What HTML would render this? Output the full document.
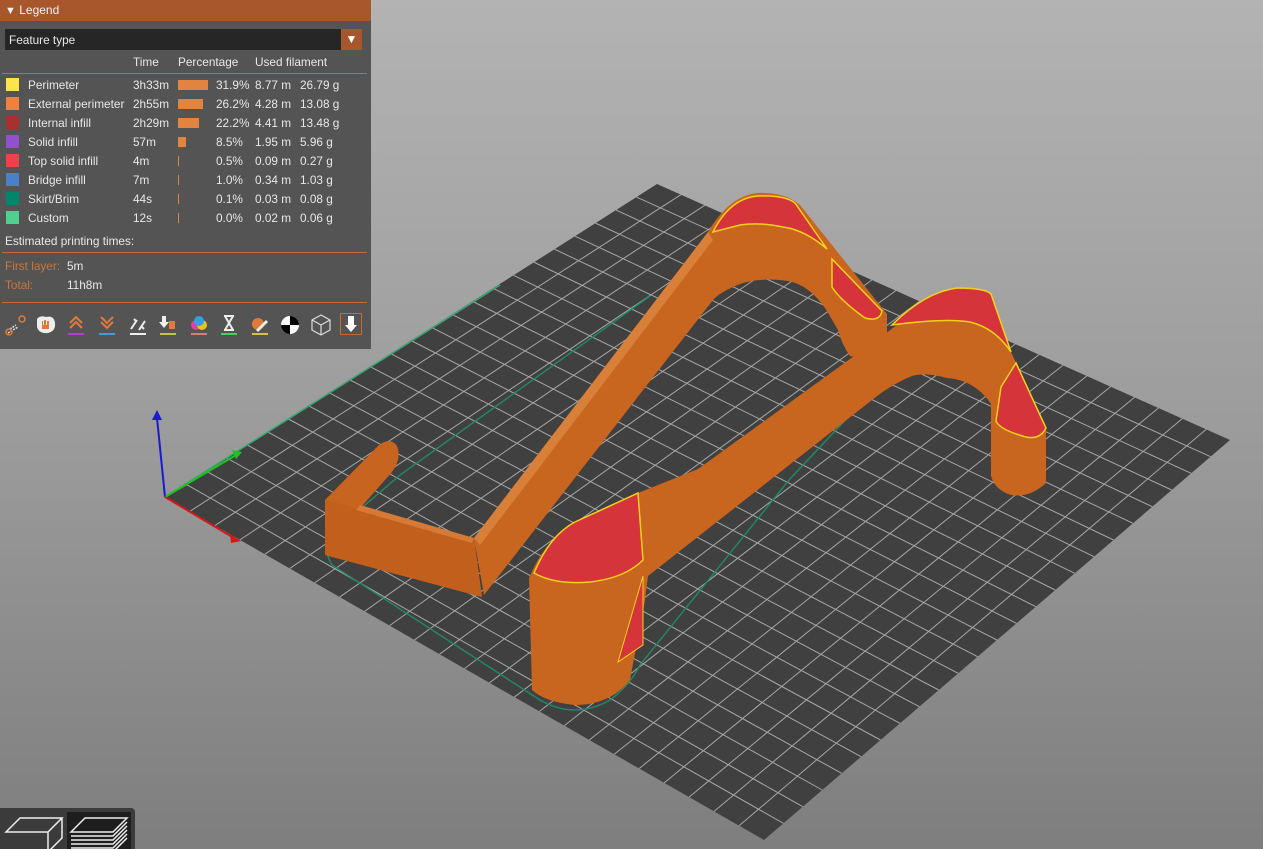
<!DOCTYPE html>
<html><head><meta charset="utf-8">
<style>
html,body{margin:0;padding:0;width:1263px;height:849px;overflow:hidden;font-family:"Liberation Sans",sans-serif}
body{background:linear-gradient(#b3b3b3 0%,#9c9c9c 50%,#7e7e7e 100%);position:relative}
#panel{position:absolute;left:0;top:0;width:371px;height:349px;background:#545454;color:#e8e8e8;font-size:11.8px}
#hdr{height:21px;background:#a8562c;color:#f2f2f2;font-size:12px;line-height:21px}
.t{position:absolute;white-space:nowrap}
.sw{position:absolute;left:6px;width:13px;height:13px}
.bar{position:absolute;left:178px;height:10px;background:#e0843f}
.hl{position:absolute;left:2px;width:365px;height:1px;background:#c86a35}
.ic{position:absolute;top:313px;width:24px;height:24px}
</style></head><body>
<svg id="scene" width="1263" height="849" style="position:absolute;left:0;top:0">
<polygon points="657,184 1230,440 764,840 165,497" fill="#404040"/>
<g id="grid" stroke="#b9b9b9" stroke-width="1" opacity="0.85"></g>
<path d="M650,296 L400,475 L330,535 Q322,548 332,565 L540,700 Q575,720 610,700 Q630,685 640,665 L789,480 L850,415" fill="none" stroke="#1f8a68" stroke-width="1.4"/>
<polyline points="165,497 500,285" stroke="#3aa870" stroke-width="1.5" fill="none"/>
<!-- hook -->
<path d="M325,500 L378,446 Q390,436 397,446 Q402,458 392,472 L362,506 L474,538 L482,597 L325,555 Z" fill="#c7641f"/>
<polygon points="325,500 474,538 482,597 325,555" fill="#c25f1c"/>
<polygon points="360,505 474,538 472,543 356,510" fill="#d67a35"/>
<!-- left bar & arch -->
<path d="M474,538 L708,232 Q730,195 758,193 Q785,192 800,205 L887,314 L887,345 Q870,362 850,356 Q842,345 838,330 L827,311 Q810,285 788,281 Q760,277 740,284 Q720,292 713,300 L484,595 Z" fill="#c8651f"/>
<polygon points="474,538 708,232 713,240 480,545" fill="#d8803a"/>
<path d="M713,232 Q730,198 758,196 Q785,195 795,203 L827,249 Q805,230 783,227 Q760,222 740,225 Z" fill="#d5343a" stroke="#f3d21a" stroke-width="1.5"/>
<path d="M832,259 L882,311 Q880,322 865,318 Q840,300 832,287 Z" fill="#d5343a" stroke="#f3d21a" stroke-width="1.5"/>
<!-- right bar & arch -->
<path d="M529,578 Q545,540 570,528 L638,493 L698,469 L897,325 Q930,290 960,288 Q985,288 991,294 L1011,352 L1046,428 L1046,483 Q1030,498 1011,495 Q995,490 991,476 L991,404 Q975,380 947,378 Q925,372 912,376 Q890,385 872,400 L648,576 L645,600 L630,680 Q610,705 575,705 Q545,702 532,690 Z" fill="#c8651f"/>
<path d="M534,573 Q550,535 575,522 L638,493 L643,560 Q625,578 590,582 Q555,585 534,573 Z" fill="#d5343a" stroke="#f3d21a" stroke-width="1.5"/>
<polygon points="618,662 643,576 643,645" fill="#d5343a" stroke="#f3d21a" stroke-width="1"/>
<path d="M892,325 Q925,292 957,288 Q985,288 991,294 L1011,352 Q995,328 970,322 Q945,318 892,325 Z" fill="#d5343a" stroke="#f3d21a" stroke-width="1.5"/>
<path d="M1001,387 L1016,363 L1046,428 Q1040,440 1026,437 Q1000,430 996,421 Z" fill="#d5343a" stroke="#f3d21a" stroke-width="1.5"/>
<!-- axes -->
<line x1="165" y1="497" x2="157" y2="418" stroke="#1a1ad0" stroke-width="2"/>
<polygon points="152,420 157,410 162,420" fill="#1a1ad0"/>
<line x1="165" y1="497" x2="236" y2="455" stroke="#22c022" stroke-width="2"/>
<polygon points="232,450 242,452 236,459" fill="#22c022"/>
<line x1="165" y1="497" x2="234" y2="538" stroke="#d01a1a" stroke-width="2"/>
<polygon points="230,534 241,541 231,543" fill="#d01a1a"/>
</svg>
<script>
(function(){var g=document.getElementById('grid');var A=[657,184],B=[1230,440],C=[764,840],D=[165,497];var n=24,s='';
function L(p,q,t){return[p[0]+(q[0]-p[0])*t,p[1]+(q[1]-p[1])*t]}
for(var i=1;i<n;i++){var t=i/n;var p=L(A,B,t),q=L(D,C,t);s+='<line x1="'+p[0]+'" y1="'+p[1]+'" x2="'+q[0]+'" y2="'+q[1]+'"/>';p=L(A,D,t);q=L(B,C,t);s+='<line x1="'+p[0]+'" y1="'+p[1]+'" x2="'+q[0]+'" y2="'+q[1]+'"/>';}
g.innerHTML=s;})();
</script>
<div id="panel">
<div id="hdr"><span style="margin-left:5px;font-size:11px">▼</span>&nbsp;Legend</div>
<div style="position:absolute;left:5px;top:29px;width:336px;height:21px;background:#262626"></div>
<div class="t" style="left:9px;top:33px">Feature type</div>
<div style="position:absolute;left:341px;top:29px;width:21px;height:21px;background:#a8562c;color:#fff;text-align:center;line-height:21px;font-size:12px">▼</div>
<div class="t" style="left:133px;top:55px">Time</div>
<div class="t" style="left:178px;top:55px">Percentage</div>
<div class="t" style="left:255px;top:55px">Used filament</div>
<div class="hl" style="top:73px"></div>
<div class="sw" style="top:78px;background:#fbe54a"></div>
<div class="sw" style="top:97px;background:#f0803e"></div>
<div class="sw" style="top:116px;background:#a83030"></div>
<div class="sw" style="top:135px;background:#9050d0"></div>
<div class="sw" style="top:154px;background:#f0404a"></div>
<div class="sw" style="top:173px;background:#4a80c8"></div>
<div class="sw" style="top:192px;background:#00866a"></div>
<div class="sw" style="top:211px;background:#50d090"></div>
<div class="t" style="left:28px;top:76px;line-height:19px">Perimeter<br>External perimeter<br>Internal infill<br>Solid infill<br>Top solid infill<br>Bridge infill<br>Skirt/Brim<br>Custom</div>
<div class="t" style="left:133px;top:76px;line-height:19px">3h33m<br>2h55m<br>2h29m<br>57m<br>4m<br>7m<br>44s<br>12s</div>
<div class="bar" style="top:80px;width:30px"></div>
<div class="bar" style="top:99px;width:25px"></div>
<div class="bar" style="top:118px;width:21px"></div>
<div class="bar" style="top:137px;width:8px"></div>
<div class="bar" style="top:156px;width:1px"></div>
<div class="bar" style="top:175px;width:1px"></div>
<div class="bar" style="top:194px;width:1px"></div>
<div class="bar" style="top:213px;width:1px"></div>
<div class="t" style="left:216px;top:76px;line-height:19px">31.9%<br>26.2%<br>22.2%<br>8.5%<br>0.5%<br>1.0%<br>0.1%<br>0.0%</div>
<div class="t" style="left:255px;top:76px;line-height:19px">8.77 m<br>4.28 m<br>4.41 m<br>1.95 m<br>0.09 m<br>0.34 m<br>0.03 m<br>0.02 m</div>
<div class="t" style="left:300px;top:76px;line-height:19px">26.79 g<br>13.08 g<br>13.48 g<br>5.96 g<br>0.27 g<br>1.03 g<br>0.08 g<br>0.06 g</div>
<div class="t" style="left:5px;top:234px">Estimated printing times:</div>
<div class="hl" style="top:252px"></div>
<div class="t" style="left:5px;top:259px;color:#c8773f">First layer:</div>
<div class="t" style="left:67px;top:259px">5m</div>
<div class="t" style="left:5px;top:278px;color:#c8773f">Total:</div>
<div class="t" style="left:67px;top:278px">11h8m</div>
<div class="hl" style="top:302px"></div>
<svg class="ic" style="left:4px" viewBox="0 0 24 24"><circle cx="18" cy="6" r="3" fill="none" stroke="#e07a3a" stroke-width="1.5"/><path d="M4 20 L14 14 M6 16 l6-4" stroke="#ddd" stroke-width="1.5" stroke-dasharray="2 1"/><circle cx="5" cy="19" r="3" fill="none" stroke="#e07a3a" stroke-width="1.5"/></svg>
<svg class="ic" style="left:34px" viewBox="0 0 24 24"><path d="M3 6 Q6 2 12 4 Q20 2 21 10 Q22 18 14 20 Q5 21 3 14Z" fill="#eee"/><path d="M8 8 v8 h7 v-8 h-2 v4 h-1 v-5 h-2 v5 h-1 v-4z" fill="#e07a3a"/></svg>
<svg class="ic" style="left:64px" viewBox="0 0 24 24"><path d="M6 10 l6-6 6 6 M6 15 l6-6 6 6" stroke="#e07a3a" stroke-width="2" fill="none"/><rect x="4" y="20" width="16" height="2" fill="#b040d0"/></svg>
<svg class="ic" style="left:95px" viewBox="0 0 24 24"><path d="M6 4 l6 6 6-6 M6 9 l6 6 6-6" stroke="#e07a3a" stroke-width="2" fill="none"/><rect x="4" y="20" width="16" height="2" fill="#40a0d0"/></svg>
<svg class="ic" style="left:126px" viewBox="0 0 24 24"><path d="M5 16 l6-9 M13 17 l6-9 M8 6 l2 2 M16 14 l2 2" stroke="#eee" stroke-width="2" fill="none"/><rect x="4" y="20" width="16" height="2" fill="#eee"/></svg>
<svg class="ic" style="left:156px" viewBox="0 0 24 24"><path d="M6 3 h4 v6 h3 l-5 6 -5-6 h3z" fill="#eee"/><rect x="13" y="8" width="6" height="8" fill="#e07a3a"/><rect x="4" y="20" width="16" height="2" fill="#c8c040"/></svg>
<svg class="ic" style="left:187px" viewBox="0 0 24 24"><circle cx="9" cy="12" r="5" fill="#e040a0"/><circle cx="15" cy="12" r="5" fill="#f0c020"/><circle cx="12" cy="8" r="5" fill="#30a0e0"/><rect x="4" y="20" width="16" height="2" fill="#e07a7a"/></svg>
<svg class="ic" style="left:217px" viewBox="0 0 24 24"><path d="M7 3 h10 M7 17 h10 M8 3 l8 14 M16 3 l-8 14" stroke="#eee" stroke-width="2" fill="none"/><rect x="4" y="20" width="16" height="2" fill="#40d060"/></svg>
<svg class="ic" style="left:248px" viewBox="0 0 24 24"><circle cx="10" cy="11" r="6" fill="#e07a3a"/><path d="M8 17 l10-10 2 2 -10 10z" fill="#eee"/><rect x="4" y="20" width="16" height="2" fill="#d8c040"/></svg>
<svg class="ic" style="left:278px" viewBox="0 0 24 24"><circle cx="12" cy="12" r="9" fill="#fff"/><path d="M12 3 A9 9 0 0 1 21 12 H12Z M12 21 A9 9 0 0 1 3 12 H12Z" fill="#000"/></svg>
<svg class="ic" style="left:309px" viewBox="0 0 24 24"><path d="M12 2 L21 7 V17 L12 22 L3 17 V7Z M3 7 L12 12 L21 7 M12 12 V22" stroke="#ddd" stroke-width="1.2" fill="none"/></svg>
<div class="ic" style="left:340px;width:22px;height:22px;border:1px solid #c86a35;box-sizing:border-box"><svg width="20" height="20" viewBox="0 0 20 20"><path d="M7 2 h6 v9 h3 l-6 7 -6-7 h3z" fill="#fff"/></svg></div>
</div>
<div style="position:absolute;left:0;top:808px;width:135px;height:41px;background:#3b3b3b;border-top-right-radius:4px"></div>
<div style="position:absolute;left:67px;top:812px;width:64px;height:37px;background:#1e1e1e"></div>
<svg width="135" height="41" style="position:absolute;left:0;top:808px">
<path d="M6 24 L20 10 H62 L48 24 H6 Z M48 24 V41 M62 10 V30 L48 44" stroke="#eee" stroke-width="1.5" fill="none"/>
<path d="M71 24 L85 10 H127 L113 24 H71 Z" stroke="#eee" stroke-width="1.5" fill="none"/>
<path d="M71 28 H113 L127 14 M71 32 H113 L127 18 M71 36 H113 L127 22 M71 40 H113 L127 26 M113 44 L127 30" stroke="#eee" stroke-width="1.5" fill="none"/>
</svg>
</body></html>
